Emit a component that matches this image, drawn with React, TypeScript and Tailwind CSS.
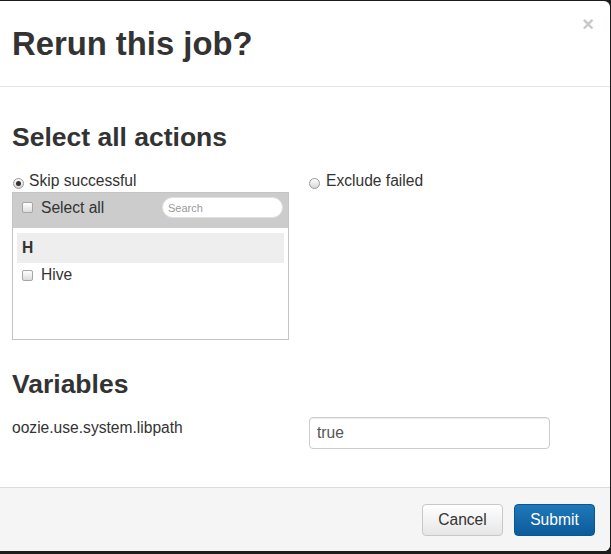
const font = { fontFamily: '"Liberation Sans", Arial, sans-serif' };

function Checkbox() {
  return (
    <span className="inline-block h-[11px] w-[11px] shrink-0 rounded-[2px] border border-[#a6a6a6] bg-gradient-to-b from-white to-[#dcdcdc]" />
  );
}

function Radio({ checked }: { checked?: boolean }) {
  return (
    <span className="flex h-[11px] w-[11px] shrink-0 items-center justify-center rounded-full border border-[#9a9a9a] bg-gradient-to-b from-white to-[#d6d6d6]">
      {checked && <span className="h-[5px] w-[5px] rounded-full bg-[#333]" />}
    </span>
  );
}

export default function App() {
  return (
    <div className="h-[554px] w-[611px] bg-[#1c1c1c] pt-px pr-px pb-[3px]" style={font}>
      <div className="relative flex h-full flex-col overflow-hidden rounded-r-md bg-white text-[15.6px] text-[#333]">
        {/* Header */}
        <div className="border-b border-[#e5e5e5] px-3 pt-[25px] pb-[24px]">
          <h3 className="text-[32.8px] leading-[36px] font-bold">Rerun this job?</h3>
          <button className="absolute top-[13px] right-[16px] text-[20px] leading-[20px] font-bold text-[#c8c8c8]">×</button>
        </div>

        {/* Body */}
        <div className="flex-1 px-3 pt-[35px]">
          <h4 className="text-[26.5px] leading-[30px] font-bold">Select all actions</h4>

          <div className="mt-[19px] grid grid-cols-[277px_1fr] gap-x-[20px]">
            <div>
              <label className="flex h-[20px] items-center leading-[20px]">
                <span className="mt-[5px] ml-px">
                  <Radio checked />
                </span>
                <span className="ml-[5px]">Skip successful</span>
              </label>
              <div className="mt-px h-[148px] border border-[#c4c4c4] bg-white">
                <div className="flex h-[35px] items-start justify-between bg-[#cccccc] pt-[4px] pr-[5px] pl-[9px]">
                  <div className="flex h-[21px] items-center">
                    <Checkbox />
                    <span className="ml-[8px] leading-[20px]">Select all</span>
                  </div>
                  <input
                    placeholder="Search"
                    className="h-[21px] w-[121px] rounded-full border border-[#e0e0e0] bg-white px-[5px] text-[11px] text-[#555] outline-none placeholder:text-[#9a9a9a]"
                  />
                </div>
                <div className="px-[4px] pt-[5px]">
                  <div className="flex h-[30px] items-center bg-[#eeeeee] pl-[5px] font-bold">H</div>
                  <div className="mt-[1px] flex h-[22px] items-center pl-[5px]">
                    <Checkbox />
                    <span className="ml-[8px]">Hive</span>
                  </div>
                </div>
              </div>
            </div>
            <div>
              <label className="flex h-[20px] items-center leading-[20px]">
                <span className="mt-[5px] ml-0">
                  <Radio />
                </span>
                <span className="ml-[6px]">Exclude failed</span>
              </label>
            </div>
          </div>

          <h4 className="mt-[29px] text-[26.5px] leading-[30px] font-bold">Variables</h4>

          <div className="mt-[19px] grid grid-cols-[277px_1fr] gap-x-[20px]">
            <div className="leading-[20px]">oozie.use.system.libpath</div>
            <input
              defaultValue="true"
              className="-mt-px h-[32px] w-[241px] rounded-[4px] border border-[#cccccc] px-[7px] text-[15.6px] text-[#555] shadow-[inset_0_1px_1px_rgba(0,0,0,0.075)] outline-none"
            />
          </div>
        </div>

        {/* Footer */}
        <div className="flex h-[64px] items-center justify-end gap-[11px] border-t border-[#dddddd] bg-[#f5f5f5] pr-[15px]">
          <button className="h-[32px] w-[81px] rounded-[4px] border border-[#c8c8c8] bg-gradient-to-b from-white to-[#e6e6e6] text-[15.6px] text-[#333]">
            Cancel
          </button>
          <button className="h-[32px] w-[81px] rounded-[4px] border border-[#0b5690] bg-gradient-to-b from-[#1f78b8] to-[#0c5b9b] text-[15.6px] text-white">
            Submit
          </button>
        </div>
      </div>
    </div>
  );
}
